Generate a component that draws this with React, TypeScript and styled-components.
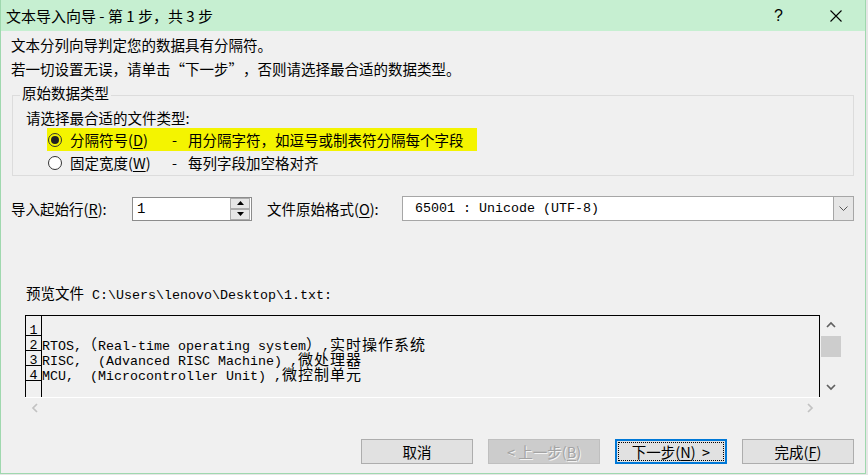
import React from "react";
import styled, { createGlobalStyle } from "styled-components";

const CJK = `"Noto Sans CJK SC", "Noto Sans", sans-serif`;
const MONO = `"Liberation Mono", "Noto Sans CJK SC", monospace`;

const GlobalStyle = createGlobalStyle`
  html, body { margin: 0; padding: 0; background: #e6e6e6; }
  body { font-family: ${CJK}; }
  * { box-sizing: border-box; }
`;

const Window = styled.div`
  width: 866px;
  height: 474px;
  background: #f0f0f0;
  border: 1px solid #9fd8ae;
  border-top: none;
  display: flex;
  flex-direction: column;
  font-family: ${CJK};
  font-size: 14.5px;
  color: #000;
`;

const TitleBar = styled.div`
  height: 31px;
  flex: none;
  background: #c6efd1;
  display: flex;
  align-items: center;
  padding: 0 1px 0 5px;
  font-size: 15px;
`;

const TitleText = styled.div`
  flex: 1;
  line-height: 31px;
  white-space: pre;
`;

const TitleButton = styled.div`
  width: 57px;
  height: 31px;
  display: flex;
  align-items: center;
  justify-content: center;
  font-family: "Liberation Sans", sans-serif;
  font-size: 16px;
`;

const Body = styled.div`
  flex: 1;
  display: flex;
  flex-direction: column;
  padding: 2px 11px 0 10px;
`;

const Intro = styled.div`
  height: 24px;
  line-height: 24px;
  white-space: nowrap;
`;

const Quote = styled.span<{ $open?: boolean }>`
  display: inline-block;
  width: 1em;
  text-align: ${(p) => (p.$open ? "right" : "left")};
`;

const GroupBox = styled.div`
  position: relative;
  margin: 14px 0 0 1px;
  width: 842px;
  border: 1px solid #dcdcdc;
  padding: 12px 0 1px 13px;
`;

const Legend = styled.div`
  position: absolute;
  top: -13px;
  left: 7px;
  padding: 0 2px;
  line-height: 20px;
  background: #f0f0f0;
`;

const Prompt = styled.div`
  height: 20px;
  line-height: 20px;
`;

const RadioRow = styled.div`
  height: 23px;
  display: flex;
  align-items: stretch;
  padding-left: 21px;
`;

const RadioInner = styled.div<{ $highlight?: boolean }>`
  display: flex;
  align-items: center;
  width: 430px;
  padding-left: 1px;
  background: ${(p) => (p.$highlight ? "#f4f400" : "transparent")};
  white-space: pre;
`;

const RadioCircle = styled.span<{ $checked?: boolean }>`
  width: 14px;
  height: 14px;
  border-radius: 50%;
  border: 1px solid #333;
  background: ${(p) => (p.$checked ? "transparent" : "#fff")};
  display: flex;
  align-items: center;
  justify-content: center;
  flex: none;
  &::after {
    content: "";
    display: ${(p) => (p.$checked ? "block" : "none")};
    width: 8px;
    height: 8px;
    border-radius: 50%;
    background: #222;
  }
`;

const RadioLabel = styled.span`
  width: 102px;
  margin-left: 8px;
  flex: none;
`;

const Dash = styled.span`
  width: 16px;
  flex: none;
`;

const U = styled.span`
  text-decoration: underline;
  text-underline-offset: 2px;
`;

const FieldRow = styled.div`
  margin-top: 20px;
  height: 25px;
  display: flex;
  align-items: center;
`;

const FieldLabel = styled.div<{ $w: number }>`
  width: ${(p) => p.$w}px;
  flex: none;
  white-space: pre;
`;

const SpinBox = styled.div`
  width: 120px;
  height: 24px;
  border: 1px solid #8c8c8c;
  background: #fff;
  display: flex;
  align-items: center;
  margin-right: 15px;
  padding: 0 1px 0 4px;
`;

const SpinValue = styled.span`
  flex: 1;
  font-family: ${MONO};
  font-size: 14px;
`;

const SpinButtons = styled.div`
  width: 20px;
  display: flex;
  flex-direction: column;
`;

const SpinButton = styled.div`
  height: 11px;
  border: 1px solid #acacac;
  background: #e6e6e6;
  display: flex;
  align-items: center;
  justify-content: center;
`;

const Combo = styled.div`
  width: 452px;
  height: 25px;
  border: 1px solid #a6a6a6;
  background: #fff;
  display: flex;
  align-items: stretch;
`;

const ComboValue = styled.div`
  flex: 1;
  padding-left: 12px;
  font-family: "Liberation Mono", monospace;
  font-size: 13.33px;
  display: flex;
  align-items: center;
  white-space: pre;
`;

const ComboButton = styled.div`
  width: 20px;
  border-left: 1px solid #a6a6a6;
  background: #e6e6e6;
  display: flex;
  align-items: center;
  justify-content: center;
`;

const PathLine = styled.div`
  margin-top: 62px;
  padding-left: 15px;
  height: 20px;
  line-height: 20px;
  white-space: pre;
  overflow: visible;
`;

const Preview = styled.div`
  margin: 12px 0 0 14px;
  display: grid;
  grid-template-columns: 795px 20px;
  grid-template-rows: 82px 20px;
  column-gap: 1px;
`;

const Grid = styled.div`
  border: 1px solid #000;
  border-bottom: none;
  background: #f0f0f0;
  display: flex;
  overflow: hidden;
`;

const NumCol = styled.div`
  width: 16px;
  flex: none;
  border-right: 1px solid #000;
  padding-top: 5px;
`;

const NumCell = styled.div`
  height: 15px;
  border-bottom: 1px solid #000;
  line-height: 19px;
  text-align: center;
  font-family: "Liberation Mono", monospace;
  font-size: 13.33px;
`;

const TextCol = styled.div`
  flex: 1;
  padding-top: 5px;
`;

const TextRow = styled.div`
  height: 15px;
  line-height: 15px;
  white-space: pre;
`;

const Run = styled.span<{ $wide: boolean; $cjk: number; $track: number }>`
  font-family: ${(p) => (p.$wide ? CJK : `"Liberation Mono", monospace`)};
  font-size: ${(p) => (p.$wide ? p.$cjk : 13.33)}px;
  letter-spacing: ${(p) => (p.$wide ? p.$track : 0)}px;
`;

const VScroll = styled.div`
  display: flex;
  flex-direction: column;
  align-items: stretch;
`;

const ScrollArrow = styled.div<{ $w?: number }>`
  height: 20px;
  width: ${(p) => (p.$w ? `${p.$w}px` : "auto")};
  display: flex;
  align-items: center;
  justify-content: center;
  flex: none;
`;

const Thumb = styled.div`
  height: 21px;
  background: #cdcdcd;
  margin-top: 1px;
`;

const ScrollSpacer = styled.div`
  flex: 1;
`;

const HScroll = styled.div`
  border-top: 1px solid #fff;
  display: flex;
  justify-content: space-between;
  align-items: center;
`;

const ButtonRow = styled.div`
  margin-top: 22px;
  display: flex;
  justify-content: flex-end;
  gap: 15px;
`;

const Button = styled.div<{ $disabled?: boolean; $default?: boolean }>`
  width: 112px;
  height: 25px;
  display: flex;
  align-items: center;
  justify-content: center;
  white-space: pre;
  background: ${(p) => (p.$disabled ? "#cccccc" : "#e1e1e1")};
  border: ${(p) =>
    p.$default ? "2px solid #0078d7" : p.$disabled ? "1px solid #bfbfbf" : "1px solid #adadad"};
  color: ${(p) => (p.$disabled ? "#a3a3a3" : "#000")};
  text-shadow: ${(p) => (p.$disabled ? "1px 1px 0 #f4f4f4" : "none")};
  padding: ${(p) => (p.$default ? "1px" : "0")};
`;

const FocusRect = styled.div`
  width: 100%;
  height: 100%;
  border: 1px dotted #000;
  display: flex;
  align-items: center;
  justify-content: center;
`;

const splitRuns = (s: string) => {
  const runs: { t: string; wide: boolean }[] = [];
  for (const ch of s) {
    const wide = ch.charCodeAt(0) > 0x7f;
    const last = runs[runs.length - 1];
    if (last && last.wide === wide) last.t += ch;
    else runs.push({ t: ch, wide });
  }
  return runs;
};

const Mixed = ({ text, cjk, track = 0 }: { text: string; cjk: number; track?: number }) => (
  <>
    {splitRuns(text).map((r, i) => (
      <Run key={i} $wide={r.wide} $cjk={cjk} $track={track}>
        {r.t}
      </Run>
    ))}
  </>
);

const Chevron = ({ dir, color }: { dir: "up" | "down" | "left" | "right"; color: string }) => {
  const pts: Record<string, string> = {
    up: "1,6 5,2 9,6",
    down: "1,2 5,6 9,2",
    left: "6,1 2,5 6,9",
    right: "2,1 6,5 2,9",
  };
  const horiz = dir === "left" || dir === "right";
  return (
    <svg width={horiz ? 8 : 10} height={horiz ? 10 : 8} viewBox={horiz ? "0 0 8 10" : "0 0 10 8"}>
      <polyline points={pts[dir]} fill="none" stroke={color} strokeWidth="1.7" />
    </svg>
  );
};

const Tri = ({ up }: { up?: boolean }) => (
  <svg width="7" height="4" viewBox="0 0 7 4">
    <polygon points={up ? "0,4 7,4 3.5,0" : "0,0 7,0 3.5,4"} fill="#000" />
  </svg>
);

const previewLines = [
  "",
  "RTOS,（Real-time operating system）,实时操作系统",
  "RISC,  (Advanced RISC Machine) ,微处理器",
  "MCU,  (Microcontroller Unit) ,微控制单元",
  "",
];

export default function App() {
  return (
    <>
      <GlobalStyle />
      <Window>
        <TitleBar>
          <TitleText>文本导入向导 - 第 1 步，共 3 步</TitleText>
          <TitleButton>?</TitleButton>
          <TitleButton>
            <svg width="12" height="12" viewBox="0 0 12 12">
              <path d="M0.5 0.5 L11.5 11.5 M11.5 0.5 L0.5 11.5" stroke="#000" strokeWidth="1.1" />
            </svg>
          </TitleButton>
        </TitleBar>
        <Body>
          <Intro>文本分列向导判定您的数据具有分隔符。</Intro>
          <Intro>
            若一切设置无误，请单击<Quote $open>“</Quote>下一步<Quote>”</Quote>，否则请选择最合适的数据类型。
          </Intro>
          <GroupBox>
            <Legend>原始数据类型</Legend>
            <Prompt>请选择最合适的文件类型:</Prompt>
            <RadioRow>
              <RadioInner $highlight>
                <RadioCircle $checked />
                <RadioLabel>
                  分隔符号(<U>D</U>)
                </RadioLabel>
                <Dash>-</Dash>
                <span>用分隔字符，如逗号或制表符分隔每个字段</span>
              </RadioInner>
            </RadioRow>
            <RadioRow>
              <RadioInner>
                <RadioCircle />
                <RadioLabel>
                  固定宽度(<U>W</U>)
                </RadioLabel>
                <Dash>-</Dash>
                <span>每列字段加空格对齐</span>
              </RadioInner>
            </RadioRow>
          </GroupBox>
          <FieldRow>
            <FieldLabel $w={121}>
              导入起始行(<U>R</U>):
            </FieldLabel>
            <SpinBox>
              <SpinValue>1</SpinValue>
              <SpinButtons>
                <SpinButton>
                  <Tri up />
                </SpinButton>
                <SpinButton>
                  <Tri />
                </SpinButton>
              </SpinButtons>
            </SpinBox>
            <FieldLabel $w={135}>
              文件原始格式(<U>O</U>):
            </FieldLabel>
            <Combo>
              <ComboValue>65001 : Unicode (UTF-8)</ComboValue>
              <ComboButton>
                <svg width="9" height="5" viewBox="0 0 9 5">
                  <polyline points="0.5,0.5 4.5,4.5 8.5,0.5" fill="none" stroke="#555" strokeWidth="1" />
                </svg>
              </ComboButton>
            </Combo>
          </FieldRow>
          <PathLine>
            <Mixed text={"预览文件 C:\\Users\\lenovo\\Desktop\\1.txt:"} cjk={14.5} />
          </PathLine>
          <Preview>
            <Grid>
              <NumCol>
                {["1", "2", "3", "4"].map((n) => (
                  <NumCell key={n}>{n}</NumCell>
                ))}
              </NumCol>
              <TextCol>
                {previewLines.map((l, i) => (
                  <TextRow key={i}>
                    <Mixed text={l} cjk={15} track={1} />
                  </TextRow>
                ))}
              </TextCol>
            </Grid>
            <VScroll>
              <ScrollArrow>
                <Chevron dir="up" color="#606060" />
              </ScrollArrow>
              <Thumb />
              <ScrollSpacer />
              <ScrollArrow>
                <Chevron dir="down" color="#606060" />
              </ScrollArrow>
            </VScroll>
            <HScroll>
              <ScrollArrow $w={20}>
                <Chevron dir="left" color="#c2c2c2" />
              </ScrollArrow>
              <ScrollArrow $w={20}>
                <Chevron dir="right" color="#c2c2c2" />
              </ScrollArrow>
            </HScroll>
          </Preview>
          <ButtonRow>
            <Button>取消</Button>
            <Button $disabled>
              {"< 上一步("}
              <U>B</U>)
            </Button>
            <Button $default>
              <FocusRect>
                下一步(<U>N</U>){"  >"}
              </FocusRect>
            </Button>
            <Button>
              完成(<U>F</U>)
            </Button>
          </ButtonRow>
        </Body>
      </Window>
    </>
  );
}
